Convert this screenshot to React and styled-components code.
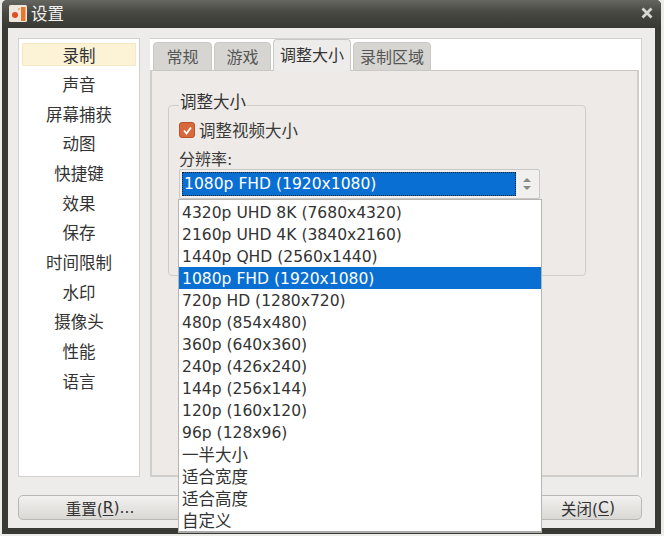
import React from "react";
import styled, { createGlobalStyle } from "styled-components";

const Global = createGlobalStyle`
  html, body { margin: 0; padding: 0; background: #ececea; }
  #root { width: 664px; height: 536px; overflow: hidden; }
  * { box-sizing: border-box; }
`;

const FONT = `"DejaVu Sans", "Noto Sans CJK SC", sans-serif`;

const Win = styled.div`
  width: 659px;
  height: 534px;
  margin-left: 2px;
  display: flex;
  flex-direction: column;
  background: #3a3a35;
  border-radius: 5px 5px 0 0;
  font-family: ${FONT};
  color: #3a3a38;
`;
const TitleBar = styled.div`
  height: 28px;
  flex: none;
  display: flex;
  align-items: center;
  padding: 0 8px 2px 7px;
  gap: 4px;
  background: linear-gradient(#666660 0%, #484843 45%, #393934 100%);
  border-radius: 5px 5px 0 0;
`;
const Title = styled.span`
  font-size: 16.5px;
  color: #f0f0ee;
  flex: 1;
`;
const Content = styled.div`
  flex: 1;
  margin: 0 6px 6px 6px;
  background: #edecea;
  padding: 10px 13px 8px 10px;
  display: flex;
  flex-direction: column;
  gap: 18px;
`;
const Main = styled.div`
  display: flex;
  gap: 10px;
  height: 439px;
`;
const Sidebar = styled.ul`
  width: 122px;
  flex: none;
  margin: 0;
  padding: 4px 3px;
  list-style: none;
  background: #fff;
  border: 1px solid #d2d1cd;
  display: flex;
  flex-direction: column;
`;
const SideItem = styled.li`
  height: 29.7px;
  flex: none;
  display: flex;
  align-items: center;
  justify-content: center;
  font-size: 16.5px;
  color: #333;
  ${(p) => p.$active && `
    height: 23px;
    margin-bottom: 3px;
    background: #fcf2d6;
    border: 1px solid #f5e8c4;
  `}
`;
const Right = styled.div`
  flex: 1;
  display: flex;
  flex-direction: column;
  background: #fff;
  border: 1px solid #d2d1cd;
  border-bottom: 0;
  border-left: 0;
`;
const TabRow = styled.div`
  height: 32px;
  flex: none;
  display: flex;
  align-items: flex-end;
  gap: 2px;
  padding-left: 3px;
  position: relative;
  z-index: 1;
  margin-bottom: -1px;
`;
const Tab = styled.div`
  height: ${(p) => (p.$active ? 32 : 29)}px;
  width: ${(p) => p.$w}px;
  padding-bottom: ${(p) => (p.$active ? 3 : 1)}px;
  display: flex;
  align-items: center;
  justify-content: center;
  font-size: 16px;
  border: 1px solid #c9c8c4;
  border-bottom: ${(p) => (p.$active ? "0" : "1px solid #c9c8c4")};
  border-radius: 4px 4px 0 0;
  background: ${(p) => (p.$active ? "#edecea" : "#d6d5d2")};
  color: ${(p) => (p.$active ? "#333" : "#555")};
`;
const Pane = styled.div`
  flex: 1;
  margin-right: 2px;
  background: #edeae8;
  border: 2px solid #cfcecb;
  border-top: 1px solid #c9c8c4;
  padding: 25px 51px 0 16px;
`;
const Group = styled.fieldset`
  margin: 0;
  height: 180px;
  padding: 6px 0 0 10px;
  border: 1px solid #cfcecb;
  border-radius: 4px;
`;
const Legend = styled.legend`
  font-size: 16.5px;
  padding: 0 1px;
  margin-left: 0;
  line-height: 18px;
  color: #333;
  position: relative;
  top: -2px;
`;
const CheckRow = styled.div`
  display: flex;
  align-items: center;
  gap: 4px;
  height: 20px;
  font-size: 16.5px;
`;
const CheckBox = styled.span`
  width: 16px;
  height: 16px;
  border-radius: 3px;
  background: #d9683c;
  border: 1px solid #b9532c;
  display: flex;
  align-items: center;
  justify-content: center;
`;
const Label = styled.div`
  font-size: 16px;
  margin-top: 10px;
  height: 19px;
  line-height: 19px;
`;
const Combo = styled.div`
  position: relative;
  width: 361px;
  height: 30px;
  border: 1px solid #c9c8c4;
  border-radius: 2px;
  background: #f1f0ee;
  display: flex;
  padding: 2px;
`;
const ComboValue = styled.div`
  flex: 1;
  background: #0a6fd2;
  outline: 1px dotted #222;
  outline-offset: -1px;
  color: #fff;
  font-size: 15.55px;
  display: flex;
  align-items: center;
  padding-left: 2px;
`;
const ComboArrow = styled.div`
  width: 21px;
  flex: none;
  display: flex;
  align-items: center;
  justify-content: center;
`;
const DropList = styled.ul`
  position: absolute;
  left: -2px;
  top: 29px;
  width: 364px;
  margin: 0;
  padding: 1px 0 0 0;
  height: 334px;
  list-style: none;
  background: #fff;
  border: 1px solid #b5b4b0;
  border-bottom: 2px solid #aaa;
  z-index: 5;
`;
const DropItem = styled.li`
  height: 22px;
  display: flex;
  align-items: center;
  padding: ${(p) => (p.$cjk ? "0 0 1px 3px" : "2px 0 0 3px")};
  font-size: ${(p) => (p.$cjk ? 16.5 : 15.55)}px;
  white-space: nowrap;
  color: ${(p) => (p.$active ? "#fff" : "#333")};
  background: ${(p) => (p.$active ? "#0a6fd2" : "transparent")};
`;
const Footer = styled.div`
  display: flex;
  justify-content: space-between;
  height: 25px;
`;
const Btn = styled.div`
  width: ${(p) => p.$w}px;
  height: 25px;
  border: 1px solid #b9b8b4;
  border-radius: 5px;
  background: linear-gradient(#f2f1ef, #d9d8d5);
  display: flex;
  align-items: center;
  justify-content: ${(p) => p.$justify || "center"};
  padding: ${(p) => p.$pad || "0"};
  font-size: 15.5px;
  color: #333;
  u { text-underline-offset: 2px; }
`;

const sides = ["录制","声音","屏幕捕获","动图","快捷键","效果","保存","时间限制","水印","摄像头","性能","语言"];
const res = ["4320p UHD 8K (7680x4320)","2160p UHD 4K (3840x2160)","1440p QHD (2560x1440)","1080p FHD (1920x1080)","720p HD (1280x720)","480p (854x480)","360p (640x360)","240p (426x240)","144p (256x144)","120p (160x120)","96p (128x96)","一半大小","适合宽度","适合高度","自定义"];

export default function App() {
  return (
    <>
      <Global />
      <Win>
        <TitleBar>
          <svg width="18" height="17" viewBox="0 0 18 17">
            <rect width="18" height="17" rx="1.5" fill="#efe6dc" />
            <rect x="12" y="2" width="4.5" height="14" fill="#e8762c" />
            <circle cx="6" cy="10" r="3" fill="#d9502a" />
            <circle cx="10" cy="4" r="1" fill="#e8a070" />
          </svg>
          <Title>设置</Title>
          <svg width="12" height="12" viewBox="0 0 12 12">
            <path d="M1.5 1.5 L10.5 10.5 M10.5 1.5 L1.5 10.5" stroke="#d8d8d2" strokeWidth="2.8" />
          </svg>
        </TitleBar>
        <Content>
          <Main>
            <Sidebar>
              {sides.map((s, i) => (
                <SideItem key={s} $active={i === 0}>{s}</SideItem>
              ))}
            </Sidebar>
            <Right>
              <TabRow>
                <Tab $w={59}>常规</Tab>
                <Tab $w={57}>游戏</Tab>
                <Tab $w={78} $active>调整大小</Tab>
                <Tab $w={78}>录制区域</Tab>
              </TabRow>
              <Pane>
                <Group>
                  <Legend>调整大小</Legend>
                  <CheckRow>
                    <CheckBox>
                      <svg width="11" height="11" viewBox="0 0 11 11">
                        <path d="M2 5.5 L4.5 8.5 L9 2.5" fill="none" stroke="#fff" strokeWidth="1.8" />
                      </svg>
                    </CheckBox>
                    调整视频大小
                  </CheckRow>
                  <Label>分辨率:</Label>
                  <Combo>
                    <ComboValue>1080p FHD (1920x1080)</ComboValue>
                    <ComboArrow>
                      <svg width="10" height="14" viewBox="0 0 10 14">
                        <path d="M5 1 L9 5 H1 Z M5 13 L9 9 H1 Z" fill="#888" />
                      </svg>
                    </ComboArrow>
                    <DropList>
                      {res.map((r, i) => (
                        <DropItem key={r} $active={i === 3} $cjk={i > 10}>{r}</DropItem>
                      ))}
                    </DropList>
                  </Combo>
                </Group>
              </Pane>
            </Right>
          </Main>
          <Footer>
            <Btn $w={164}>重置(<u>R</u>)...</Btn>
            <Btn $w={108} $justify="flex-start" $pad="0 0 0 26px">关闭(<u>C</u>)</Btn>
          </Footer>
        </Content>
      </Win>
    </>
  );
}
